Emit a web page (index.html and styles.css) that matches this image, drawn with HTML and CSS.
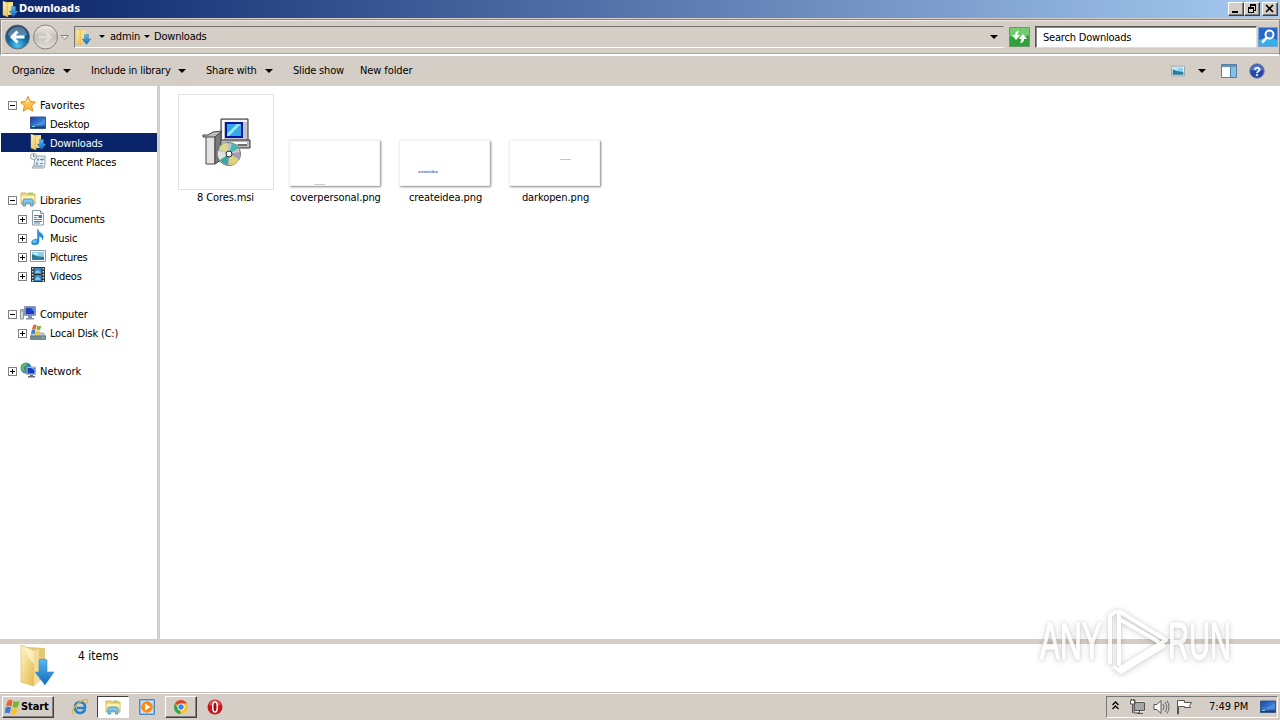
FILE: index.html
```
<!DOCTYPE html>
<html>

	<head>
		<meta charset="UTF-8">
		<title>Downloads</title>
		<link rel="stylesheet" href="styles.css">
	</head>

	<body>
		<!-- shared icons -->
		<svg class="defs">
			<defs>
				<linearGradient id="gold" x1="0" x2="1" y1="0" y2="1">
					<stop offset="0" stop-color="#fff6c0" />
					<stop offset="1" stop-color="#e3b94c" />
				</linearGradient>
				<linearGradient id="blue" x1="0" x2="0" y1="0" y2="1">
					<stop offset="0" stop-color="#59b9ee" />
					<stop offset="1" stop-color="#126ac0" />
				</linearGradient>
				<linearGradient id="screen" x1="0" x2="1" y1="0" y2="1">
					<stop offset="0" stop-color="#17439c" />
					<stop offset="0.6" stop-color="#3c7edb" />
					<stop offset="1" stop-color="#2459b4" />
				</linearGradient>
				<radialGradient id="backBall" cx="0.5" cy="0.85" r="0.8">
					<stop offset="0" stop-color="#48c8ee" />
					<stop offset="0.5" stop-color="#156da9" />
					<stop offset="1" stop-color="#14365e" />
				</radialGradient>
				<linearGradient id="greyBall" x1="0" x2="0" y1="0" y2="1">
					<stop offset="0" stop-color="#eeeae5" />
					<stop offset="0.5" stop-color="#c5c0ba" />
					<stop offset="1" stop-color="#e3dfda" />
				</linearGradient>
			</defs>
			<symbol id="i-down" viewBox="0 0 16 16">
				<path d="M4 1h7v13H4z" fill="#e9c769" />
				<path d="M1 0l5 2v14l-5-2z" fill="url(#gold)" stroke="#d7b04d" stroke-width=".5" />
				<path d="M6 2l5-1v8l-5 5z" fill="#f7df94" />
				<path d="M9.500 5.500h4V10H16l-4.500 5.500L7 10h2.500z" fill="url(#blue)" stroke="#2377b9" stroke-width=".4" />
			</symbol>
			<symbol id="i-lib" viewBox="0 0 16 16">
				<path d="M1 2h5l1 1h8v10H1z" fill="#f2d77d" stroke="#c7a544" stroke-width=".8" />
				<path d="M8 1.500h5v2H8z" fill="#9ed064" />
				<path d="M1.500 5h13v5h-13z" fill="#fff0ad" />
				<path d="M3 15V9.500Q3 8 5 8h6q2 0 2 1.500V15h-2.500v-3h-5v3z" fill="#82c8ed" stroke="#378cc4" stroke-width=".8" />
			</symbol>
			<symbol id="i-desk" viewBox="0 0 16 16">
				<path d="M.5 2h15v11.500H.5z" fill="url(#screen)" stroke="#35558c" />
				<path d="M1 10Q8 10 15 4v6z" fill="#64a4ec" opacity=".5" />
				<path d="M1 11.500h14V13H1z" fill="#223a65" />
				<path d="M2 11h3v1H2z" fill="#7bdbea" />
			</symbol>
			<symbol id="i-pic" viewBox="0 0 16 16">
				<path d="M.5 2.500h15v11H.5z" fill="#fff" stroke="#8b9aa6" />
				<path d="M2 4h12v8H2z" fill="#8cd0f2" />
				<path d="M2 6l4 2 8 1v3H2z" fill="#287b73" />
				<path d="M2 10q6-2 12 0v2H2z" fill="#2f79b4" />
				<path d="M3 6q3-1 5 0" stroke="#fff" fill="none" />
			</symbol>
			<symbol id="i-flag" viewBox="0 0 16 16">
				<path d="M3 2q2.500-2 5-.5L7 7.500Q4.500 6 1.500 7.500z" fill="#ee6230" />
				<path d="M9 2q2.500 1.500 6 0L13.500 8Q11 9.500 8 8z" fill="#79b837" />
				<path d="M1.200 8.500q2.600-1.500 5.500 0L5 14.500q-2.500-1.500-5 0z" fill="#347ed3" />
				<path d="M7.500 9q2.500 1.500 5.700 0L12 15q-3 1.500-6 0z" fill="#f7c32d" />
			</symbol>
		</svg>

		<div class="window">
			<div class="titlebar">
				<svg class="icon"><use href="#i-down" /></svg>
				<span class="title">Downloads</span>
				<div class="buttons">
					<span class="btn"><svg width="12" height="10"><path d="M2 7h6v2H2z" /></svg></span>
					<span class="btn"><svg width="12" height="10"><path d="M4 0h6v7H8V6h1V2H5v1H4zM2 3h6v6H2zM3 5v3h4V5z" fill-rule="evenodd" /></svg></span>
					<span class="btn close"><svg width="12" height="10"><path d="M2 1l7 7M9 1L2 8" stroke="#000" stroke-width="1.600" /></svg></span>
				</div>
			</div>

			<div class="address">
				<svg class="nav" width="70" height="30" viewBox="0 0 70 30">
					<circle cx="16.500" cy="15" r="12" fill="url(#backBall)" stroke="#66717d" />
					<path d="M6.500 13Q8.500 5 16.500 4.500T26.500 13Q16.500 17 6.500 13z" fill="#fff" opacity=".28" />
					<path d="M23.500 15H11.500M16.500 9.500L11 15l5.500 5.500" fill="none" stroke="#fff" stroke-width="3" />
					<circle cx="44.500" cy="15" r="12" fill="url(#greyBall)" stroke="#85817d" />
					<path d="M37.500 15h11M44.500 10l5 5-5 5" fill="none" stroke="#e0dcd7" stroke-width="2.500" />
					<path d="M60 13.500h7.500l-3.750 4z" fill="#eee" stroke="#8b8783" />
				</svg>
				<div class="path">
					<svg class="icon"><use href="#i-down" /></svg>
					<i class="arrow small a1"></i>
					<span class="t-admin">admin</span>
					<i class="arrow small a2"></i>
					<span class="t-downloads">Downloads</span>
					<i class="arrow last"></i>
				</div>
				<svg class="refresh" width="21" height="20" viewBox="0 0 21 20">
					<path d="M.5.500h20v19H.5z" fill="#2fa23c" stroke="#6d9a6b" />
					<path d="M1 1h19v7Q10 13 1 9z" fill="#72cb6c" />
					<path d="M10 4Q6 4 6 8H3l4 5 4-5H8.500q0-2 1.500-4zM11 16q4 0 4-4h3l-4-5-4 5h2.500q0 2-1.500 4z" fill="#fff" />
				</svg>
				<div class="search">Search Downloads</div>
				<svg class="go" width="20" height="20" viewBox="0 0 20 20">
					<path d="M.5.500h19v19H.5z" fill="#2566c9" stroke="#7b9ed0" />
					<path d="M1 13q9-5 18 0v6H1z" fill="#35aee9" />
					<circle cx="11.500" cy="7.500" r="4" fill="#3979d5" stroke="#fff" stroke-width="2" />
					<path d="M8.500 11L4 15.500" stroke="#fff" stroke-width="2.500" />
				</svg>
			</div>

			<div class="toolbar">
				<span class="t-org">Organize</span><i class="arrow b1"></i>
				<span class="t-inc">Include in library</span><i class="arrow b2"></i>
				<span class="t-share">Share with</span><i class="arrow b3"></i>
				<span class="t-slide">Slide show</span>
				<span class="t-new">New folder</span>
				<div class="views">
					<svg width="14" height="14" viewBox="0 0 16 16"><use href="#i-pic" /></svg>
					<i class="arrow"></i>
					<svg class="pane" width="16" height="14"><path d="M.5.500h15v13H.5z" fill="#fff" stroke="#547fa9" /><path d="M1 1h14v2H1z" fill="#6594ba" /><path d="M10 3h5v10h-5z" fill="#85c1e2" /><path d="M9.500 3v10" stroke="#547fa9" /></svg>
					<svg class="help" width="16" height="16"><circle cx="8" cy="8" r="7.300" fill="#2446a8" stroke="#8290aa" /><path d="M2 7Q3 2 8 2t6 5Q8 9 2 7z" fill="#769bdc" opacity=".6" /><text x="8" y="12.500" text-anchor="middle">?</text></svg>
				</div>
			</div>

			<div class="main">
				<ul class="tree">
					<li><b class="box minus"></b>
						<svg class="icon" viewBox="0 0 16 16"><path d="M8 .5l2.300 5 5.200.6-3.900 3.600 1.200 5.500L8 12.300l-4.800 2.900 1.200-5.500L.5 6.100l5.200-.6z" fill="#ffc04a" stroke="#e38b22" /><path d="M8 2.500l1.500 4H5z" fill="#ffe8a0" /></svg>
						<span class="wide">Favorites</span></li>
					<li class="sub"><svg class="icon"><use href="#i-desk" /></svg><span>Desktop</span></li>
					<li class="sub active"><svg class="icon"><use href="#i-down" /></svg><span>Downloads</span></li>
					<li class="sub"><svg class="icon" viewBox="0 0 16 16"><path d="M5 3h10v8l-1 4H2l2-3z" fill="#e3edf2" stroke="#8a9aa3" stroke-width=".9" /><path d="M7 5.500h2v2H7zM11 5.500h2v2h-2zM6 9.500h2v2H6z" fill="#6b9bc0" /><path d="M10 6.500h4M10 10.500h3M4 13h9" stroke="#7a8b95" /><circle cx="3.500" cy="3.500" r="3" fill="#f5f5f5" stroke="#8f9ba3" /><path d="M3.500 1.500v2h1.500" fill="none" stroke="#555" stroke-width=".8" /></svg><span>Recent Places</span></li>
					<li></li>
					<li><b class="box minus"></b><svg class="icon"><use href="#i-lib" /></svg><span>Libraries</span></li>
					<li class="sub"><b class="box plus"></b>
						<svg class="icon" viewBox="0 0 16 16"><path d="M2.500.500h8l3 3v11.500h-11z" fill="#fff" stroke="#8799a7" /><path d="M10.500.500v3h3" fill="#cfdee8" stroke="#8799a7" /><path d="M4 5.500h4M4 7.500h3M4 9.500h8M4 11.500h8M4 13h6" stroke="#4e82ae" /><path d="M8.500 5h3.500v3H8.500z" fill="#3f75b5" /></svg>
						<span>Documents</span></li>
					<li class="sub"><b class="box plus"></b>
						<svg class="icon" viewBox="0 0 16 16"><path d="M7.500 0q1 3 4 4.500 3 2.500 1 6.500 0-3-3.500-4v5.500Q9 15.500 5 16q-3.500 0-3.500-2.500T5 10.300q1.500-.3 2.500.2z" fill="#2793de" stroke="#1668ac" stroke-width=".4" /><ellipse cx="4.500" cy="12.500" rx="2" ry="1.200" fill="#75cbf5" /></svg>
						<span>Music</span></li>
					<li class="sub"><b class="box plus"></b><svg class="icon"><use href="#i-pic" /></svg><span>Pictures</span></li>
					<li class="sub"><b class="box plus"></b>
						<svg class="icon" viewBox="0 0 16 16"><path d="M1 0h14v15H1z" fill="#30343b" /><path d="M4.500 1h7v6h-7zM4.500 8h7v6h-7z" fill="#3585cb" /><path d="M5 5q3-4 6 1H5zM5 12l3-3 3 4H5z" fill="#80c6df" /><path d="M2.700 1v14M13.300 1v14" stroke="#d3dce2" stroke-width="1.500" stroke-dasharray="1.500 1.500" /></svg>
						<span>Videos</span></li>
					<li></li>
					<li><b class="box minus"></b>
						<svg class="icon" viewBox="0 0 16 16"><path d="M.5 4.500h3V14h-3z" fill="#d7dce0" stroke="#8b979f" /><path d="M1 6h2" stroke="#62b456" /><path d="M4.500 1.500h11v9h-11z" fill="#d0d9e2" stroke="#8997a7" /><path d="M5.500 2.500h9v7h-9z" fill="#1b3fbc" /><path d="M10 2.500h4.500V7z" fill="#5b8af0" /><path d="M8 11h4v2h2v1.500H6V13h2z" fill="#8495a5" /></svg>
						<span>Computer</span></li>
					<li class="sub"><b class="box plus"></b>
						<svg class="icon" viewBox="0 0 16 16"><path d="M2.500 9h11l2 3H.5z" fill="#c1ced5" stroke="#81939b" stroke-width=".7" /><path d="M.5 12h15v3.500H.5z" fill="#738d98" stroke="#536e79" stroke-width=".7" /><path d="M12 13.500h2" stroke="#67e25c" stroke-width="1.500" /><use href="#i-flag" x="1" y="0" width="11" height="11" /></svg>
						<span>Local Disk (C:)</span></li>
					<li></li>
					<li><b class="box plus"></b>
						<svg class="icon" viewBox="0 0 16 16"><circle cx="6" cy="6" r="5.500" fill="#2c83c8" /><path d="M2 3q2-3 5-2 0 3-3 4 0 4 2 5-4 0-5-4z" fill="#69b94e" /><path d="M6.500 5h9v7.500h-9z" fill="#b8c4d0" stroke="#8190a1" stroke-width=".6" /><path d="M7.500 6h7v5.500h-7z" fill="#163bba" /><path d="M11 6h3.500v3z" fill="#5f91ef" /><path d="M10 13h3v1h2v1.500H8V14h2z" fill="#596b7c" /></svg>
						<span class="wide">Network</span></li>
				</ul>

				<div class="files">
					<div class="file">
						<div class="thumb app">
							<svg width="50" height="50" viewBox="0 0 50 50">
								<path d="M19 1h27v24H19z" fill="#c6c6c6" stroke="#333" />
								<path d="M20 2h25v2H22v20h-2z" fill="#f6f6f6" />
								<path d="M23 4h18v16H23z" fill="#0717a5" />
								<path d="M25 6h14v12H25z" fill="#35a9e7" />
								<path d="M25 16L35 6h4L27 18h-2z" fill="#9be6f7" />
								<path d="M18 22h30v8H18z" fill="#bababa" stroke="#333" />
								<path d="M28 25h17" stroke="#fff" stroke-width="2" />
								<path d="M36 27h9" stroke="#222" />
								<path d="M4 18h9v28H4z" fill="#e4e4e4" stroke="#444" />
								<path d="M13 18l6-4v28l-6 4z" fill="#787878" stroke="#444" />
								<path d="M1 19h12l7-6-9 1-5 3H1z" fill="#bdbdbd" stroke="#444" />
								<circle cx="27" cy="36" r="11.500" fill="#c5c5c9" stroke="#6e7577" />
								<path d="M27 36L17 30q3-5 8-5z" fill="#dbd98b" /><path d="M27 36L16 33q-1 6 2 9z" fill="#e4e4e4" />
								<path d="M27 36l-9 6q3 4 8 5z" fill="#3aa69f" /><path d="M27 36v11q7 0 10-5z" fill="#e3d178" />
								<path d="M27 36l10-6q-3-4-7-5z" fill="#49b8b1" /><path d="M27 36l11-2q0 4-1 7z" fill="#a59bb5" />
								<circle cx="27" cy="36" r="3" fill="#fff" stroke="#222" />
							</svg>
						</div>
						<span class="n1">8 Cores.msi</span>
					</div>
					<div class="file"><div class="thumb img"><em class="dots"></em></div><span class="n2">coverpersonal.png</span></div>
					<div class="file"><div class="thumb img"><em class="idea">createidea</em></div><span class="n3">createidea.png</span></div>
					<div class="file"><div class="thumb img"><em class="dark"></em></div><span class="n4">darkopen.png</span></div>
				</div>
			</div>

			<div class="details">
				<svg width="36" height="44" viewBox="0 0 36 44">
					<path d="M8 3l18 1v31l-16 5z" fill="#e4c878" />
					<path d="M2 1l13 5v36L2 38z" fill="url(#gold)" stroke="#dfc06b" stroke-width=".7" />
					<path d="M15 6l5-1v33l-5 4z" fill="#f4dc98" />
					<path d="M5 3l10 4v13Q8 14 5 3z" fill="#fffbe2" opacity=".6" />
					<path d="M20 16q4-2 8 0v12h7L26 41 16 28h4z" fill="url(#blue)" stroke="#3d8fcf" stroke-width=".6" />
				</svg>
				<span>4 items</span>
			</div>
		</div>

		<div class="taskbar">
			<div class="start"><svg width="17" height="16" viewBox="0 0 16 16"><use href="#i-flag" /></svg><b>Start</b></div>
			<div class="task ie">
				<svg width="18" height="18" viewBox="0 0 18 18"><path d="M14 11.500Q12.500 15 9 15 4 14.500 4 9.500T9 4q5.500.5 5 6H6" fill="none" stroke="#2382cf" stroke-width="2.700" /><path d="M2 16Q-.5 13 6 6.500T16.500 2q1 1-1 4" fill="none" stroke="#e4b52d" stroke-width="1.300" /></svg>
			</div>
			<div class="task explorer"><svg class="icon"><use href="#i-lib" /></svg></div>
			<div class="task">
				<svg width="16" height="16" viewBox="0 0 16 16"><path d="M.5.500h15v15H.5z" fill="#8cbce7" stroke="#4c87c6" /><path d="M2 2h12v12H2z" fill="#cce2f4" /><circle cx="8" cy="8" r="5.800" fill="#f58a16" /><path d="M6 4.500l5.500 3.500L6 11.500z" fill="#fff" /></svg>
			</div>
			<div class="task chrome">
				<svg width="16" height="16" viewBox="0 0 16 16"><circle cx="8" cy="8" r="7" fill="#f6c927" /><path d="M8 8L2 4.500Q4 1 8 1t6 3.500H8z" fill="#df4132" /><path d="M2 4.500L6.500 11 8 15Q2 15 1 9 1 6 2 4.500z" fill="#30a34d" /><circle cx="8" cy="8" r="3.600" fill="#fff" /><circle cx="8" cy="8" r="2.700" fill="#3f83e7" /></svg>
			</div>
			<div class="task">
				<svg width="16" height="16" viewBox="0 0 16 16"><circle cx="8" cy="8" r="7.500" fill="#c3171d" /><path d="M2 6q1-5 6-5t6 5Q8 8 2 6z" fill="#ee7773" opacity=".6" /><ellipse cx="8" cy="8" rx="2.300" ry="5" fill="#a40c14" stroke="#fff" stroke-width="1.500" /></svg>
			</div>
			<div class="tray">
				<svg class="chev" width="7" height="9"><path d="M.5 4l3-3 3 3M.5 8l3-3 3 3" fill="none" stroke="#000" stroke-width="1.300" /></svg>
				<svg class="net" width="16" height="16"><path d="M5.500 3.500h10v8h-10z" fill="#aaa" stroke="#fff" stroke-width="2" /><path d="M5.500 3.500h10v8h-10zM8 14.500h6M10.500 12v2" fill="#a7a7a7" stroke="#555" /><path d="M1 1h5v4H5v9h5" fill="none" stroke="#555" /><path d="M1.500 2v3h4V1M2.500 0v2M4.500 0v2M3.500 5v9" fill="#fff" stroke="#555" /></svg>
				<svg class="vol" width="17" height="16"><path d="M1 5.500h3l4-4v13l-4-4H1z" fill="#fff" stroke="#555" /><path d="M10 5q2 3 0 6M12 3q3.500 5 0 10M14 1.500q4 6.500 0 13" fill="none" stroke="#666" /></svg>
				<svg class="flag" width="17" height="16"><path d="M1.500 15V1.500h7v2h7l-2 3 1 2h-6v-1h-6V15z" fill="#fff" stroke="#555" /></svg>
				<span>7:49 PM</span>
				<svg class="icon"><use href="#i-desk" /></svg>
			</div>
		</div>

		<!-- watermark over the window -->
		<svg class="mark" width="230" height="76" viewBox="0 0 230 76">
			<text transform="translate(7 53) scale(.59 1)">ANY</text>
			<path d="M77 58V9l7-4M86 60V5l47 29-47 29M86 13l40 23M80 60l8 6 44-27" />
			<text transform="translate(135 53) scale(.57 1)">RUN</text>
		</svg>
	</body>

</html>
```
FILE: styles.css
```
html,
body {
	width: 100%;
	height: 100%;
	margin: 0;
	overflow: hidden;
}

body {
	display: flex;
	flex-direction: column;
	background: #d5cec6;
	color: #000;
	font: 11px/14px "DejaVu Sans Condensed", "DejaVu Sans", sans-serif;
	font-stretch: condensed;
	letter-spacing: -0.2px;
	white-space: nowrap;
}

ul,
li {
	margin: 0;
	padding: 0;
	list-style: none;
}

svg {
	display: block;
	flex: none;
}

span {
	flex: none;
}

.defs {
	position: absolute;
	width: 0;
	height: 0;
}

.icon {
	width: 16px;
	height: 16px;
}

.arrow {
	width: 0;
	height: 0;
	flex: none;
	border: 4px solid transparent;
	border-top-color: #000;
	border-bottom: 0;
}

.arrow.small {
	border-width: 3px;
	border-bottom: 0;
}

.window {
	height: 693px;
	flex: none;
	display: flex;
	flex-direction: column;
}

.titlebar {
	height: 18px;
	display: flex;
	align-items: center;
	padding: 0 2px;
	background: linear-gradient(to right, #0a246a, #a6caf0);
	color: #fff;
}

.title {
	font-weight: bold;
	margin-left: 1px;
	width: 62px;
	letter-spacing: 0;
}

.buttons {
	display: flex;
	margin-left: auto;
}

.btn {
	width: 16px;
	height: 14px;
	box-sizing: border-box;
	padding: 1px;
	background: #d5cec6;
	border: 1px solid;
	border-color: #fff #404040 #404040 #fff;
	box-shadow: inset -1px -1px #808080;
}

.close {
	margin-left: 2px;
}

.address {
	height: 37px;
	box-sizing: border-box;
	display: flex;
	align-items: center;
	margin-top: 1px;
	padding-right: 1px;
	border: 1px solid #8a8681;
	border-bottom: 2px solid #fff;
	box-shadow: inset 1px 1px #eee9e4, inset 0 -1px #aaa49e;
}

.path {
	display: flex;
	align-items: center;
	box-sizing: border-box;
	width: 930px;
	height: 22px;
	margin-left: 3px;
	padding: 0 0 1px;
	border: 1px solid;
	border-color: #77736f #d5cec6 #fff #77736f;
}

.a1 {
	margin: 0 5px 0 8px;
}

.t-admin {
	width: 28px;
}

.a2 {
	margin: 0 4px 0 6px;
}

.last {
	margin-left: auto;
	margin-right: 5px;
}

.refresh {
	margin-left: 5px;
}

.search {
	width: 222px;
	height: 22px;
	box-sizing: border-box;
	margin-left: 5px;
	padding: 4px 7px;
	background: #fff;
	border: 1px solid;
	border-color: #555 #ddd #ddd #555;
	box-shadow: inset 1px 1px #888;
}

.go {
	margin-left: auto;
}

.toolbar {
	height: 30px;
	box-sizing: border-box;
	display: flex;
	align-items: center;
	padding: 0 15px 1px 12px;
}

.t-org {
	width: 44px;
}

.b1 {
	margin: 0 20px 0 7px;
}

.t-inc {
	width: 80px;
}

.b2 {
	margin: 0 20px 0 7px;
}

.t-share {
	width: 52px;
}

.b3 {
	margin: 0 20px 0 7px;
}

.t-slide {
	width: 50px;
	margin-right: 17px;
}

.t-new {
	letter-spacing: -0.1px;
}

.views {
	display: flex;
	align-items: center;
	margin-left: auto;
}

.views .arrow {
	margin: 0 15px 0 13px;
}

.help {
	margin-left: 12px;
}

.help text {
	fill: #fff;
	font: bold 12px "Liberation Sans", sans-serif;
}

.main {
	height: 553px;
	display: flex;
	background: #fff;
	border-bottom: 5px solid #d5cec6;
}

.tree {
	width: 157px;
	padding-top: 9px;
	border-right: 3px solid #d5cec6;
}

.tree li {
	height: 19px;
	box-sizing: border-box;
	margin-left: 1px;
	padding-left: 7px;
	display: flex;
	align-items: center;
}

.tree .sub {
	padding-left: 17px;
}

.tree span {
	padding-top: 2px;
}

.tree .wide {
	letter-spacing: 0;
}

.tree .icon {
	margin: 0 4px 1px 3px;
}

.tree .sub .icon:first-child {
	margin-left: 12px;
}

.tree .active {
	background: #0a246a;
	color: #fff;
}

.box {
	width: 9px;
	height: 9px;
	box-sizing: border-box;
	margin-top: 1px;
	border: 1px solid #808080;
	background: linear-gradient(#000, #000) center / 5px 1px no-repeat;
}

.plus {
	background: linear-gradient(#000, #000) center / 5px 1px no-repeat, linear-gradient(#000, #000) center / 1px 5px no-repeat;
}

.files {
	display: flex;
	align-items: flex-start;
	padding: 8px 0 0 11px;
}

.file {
	width: 110px;
	height: 112px;
	display: flex;
	flex-direction: column;
	justify-content: flex-end;
	align-items: center;
}

.thumb {
	box-sizing: border-box;
	background: #fff;
}

.app {
	width: 96px;
	height: 96px;
	display: flex;
	align-items: center;
	justify-content: center;
	border: 1px solid #dfe1e3;
}

.app svg {
	margin: 1px 0 0 2px;
}

.img {
	width: 91px;
	height: 46px;
	margin: 0 3px 4px 0;
	border: 1px solid #f2f2f2;
	box-shadow: 1px 1px 2px #888;
	display: flex;
}

.file span {
	line-height: 16px;
	letter-spacing: -0.1px;
	margin-right: 1px;
}

.img em {
	font: 4px/4px "Liberation Sans", sans-serif;
	letter-spacing: 0;
}

.dots {
	width: 11px;
	height: 1px;
	margin: 43px 0 0 24px;
	background: #ccc;
}

.idea {
	margin: 29px 0 0 18px;
	color: #3f67c2;
	font-weight: bold !important;
}

.dark {
	width: 11px;
	height: 1px;
	margin: 18px 0 0 50px;
	background: #c4c4c4;
}

.details {
	height: 48px;
	display: flex;
	background: #fff;
	border-bottom: 1px solid #c6c0b8;
}

.details svg {
	margin: 0 23px 0 19px;
}

.details span {
	margin-top: 5px;
	font-size: 12px;
	letter-spacing: 0;
}

.taskbar {
	height: 27px;
	flex: none;
	box-sizing: border-box;
	display: flex;
	align-items: center;
	padding: 0 2px 1px;
	border-top: 1px solid #fff;
}

.start {
	width: 52px;
	height: 22px;
	box-sizing: border-box;
	display: flex;
	align-items: center;
	padding-left: 1px;
	margin-right: 10px;
	border: 1px solid;
	border-color: #fff #404040 #404040 #fff;
	box-shadow: inset -1px -1px #808080;
}

.start b {
	letter-spacing: -0.1px;
}

.task {
	width: 32px;
	height: 22px;
	box-sizing: border-box;
	display: flex;
	align-items: center;
	justify-content: center;
	margin-right: 2px;
}

.explorer {
	margin-left: -1px;
	background: #fff;
	border: 1px solid;
	border-color: #404040 #fff #fff #404040;
}

.chrome {
	border: 1px solid;
	border-color: #fff #404040 #404040 #fff;
	box-shadow: inset -1px -1px #808080;
}

.tray {
	width: 172px;
	height: 22px;
	box-sizing: border-box;
	display: flex;
	align-items: center;
	margin-left: auto;
	padding: 0 1px 0 5px;
	border: 1px solid;
	border-color: #777 #fff #fff #777;
}

.chev {
	margin-bottom: 2px;
}

.net {
	margin-left: 10px;
}

.vol {
	margin-left: 8px;
}

.flag {
	margin-left: 6px;
}

.tray .icon {
	margin-left: auto;
}

.tray span {
	margin-left: 16px;
	letter-spacing: -0.1px;
}

.mark {
	position: absolute;
	left: 1033px;
	top: 606px;
	filter: drop-shadow(0 0 1px rgba(0, 0, 0, .16)) drop-shadow(0 1px 3px rgba(0, 0, 0, .22));
	opacity: .8;
}

.mark text {
	font: 51px "Liberation Sans", sans-serif;
	letter-spacing: 0;
	fill: #fff;
	stroke: #fff;
	stroke-width: 1.5;
}

.mark path {
	fill: none;
	stroke: #fff;
	stroke-width: 4;
	stroke-linejoin: round;
}
```
